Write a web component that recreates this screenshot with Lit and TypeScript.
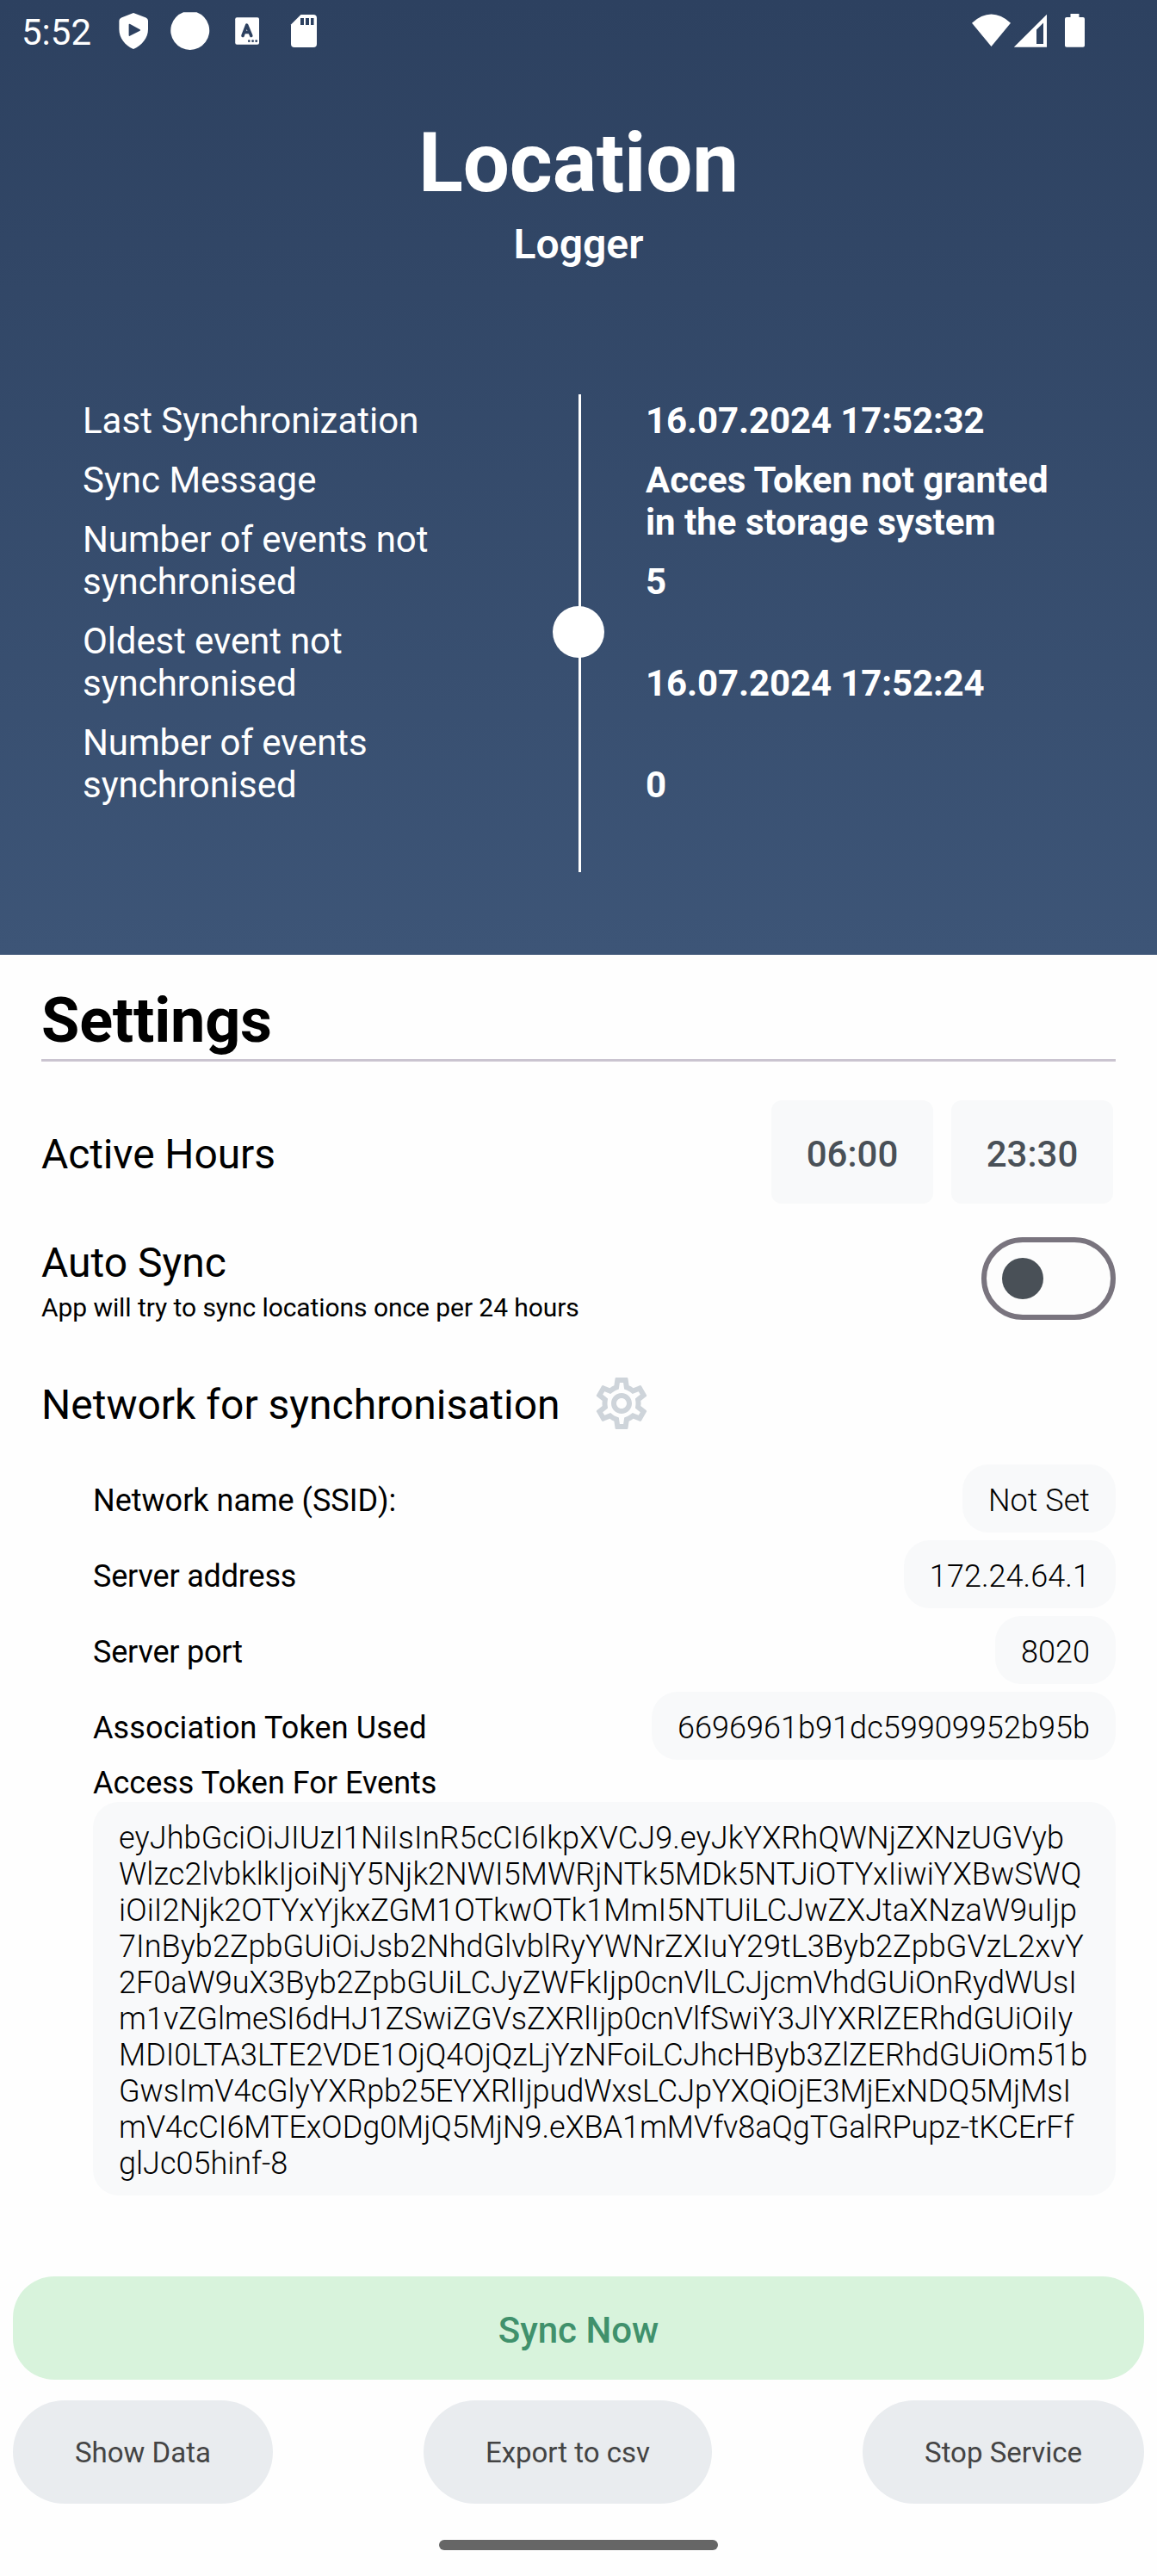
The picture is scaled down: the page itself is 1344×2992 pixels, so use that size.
import { LitElement, html, css, svg } from "lit";
import { customElement, property } from "lit/decorators.js";

const LEFT = [
  { lines: ["Last Synchronization"], tight: false },
  { lines: ["Sync Message"], tight: false },
  { lines: ["Number of events not", "synchronised"], tight: true },
  { lines: ["Oldest event not", "synchronised"], tight: true },
  { lines: ["Number of events", "synchronised"], tight: true },
];

const RIGHT = [
  { lines: ["16.07.2024 17:52:32"], tall: false, stamp: true },
  { lines: ["Acces Token not granted", "in the storage system"], tall: true, stamp: false },
  { lines: ["5"], tall: true, stamp: false },
  { lines: ["16.07.2024 17:52:24"], tall: true, stamp: true },
  { lines: ["0"], tall: true, stamp: false },
];

// label, value, label tracking in px
const NETWORK: [string, string, number][] = [
  ["Network name (SSID):", "Not Set", 0],
  ["Server address", "172.24.64.1", -0.18],
  ["Server port", "8020", -0.2],
  ["Association Token Used", "6696961b91dc59909952b95b", 0.12],
];

// line of the token, tracking in px
const TOKEN: [string, number][] = [
  ["eyJhbGciOiJIUzI1NiIsInR5cCI6IkpXVCJ9.eyJkYXRhQWNjZXNzUGVyb", 0.12],
  ["Wlzc2lvbklkIjoiNjY5Njk2NWI5MWRjNTk5MDk5NTJiOTYxIiwiYXBwSWQ", 0.06],
  ["iOiI2Njk2OTYxYjkxZGM1OTkwOTk1MmI5NTUiLCJwZXJtaXNzaW9uIjp", 0.08],
  ["7InByb2ZpbGUiOiJsb2NhdGlvblRyYWNrZXIuY29tL3Byb2ZpbGVzL2xvY", 0.06],
  ["2F0aW9uX3Byb2ZpbGUiLCJyZWFkIjp0cnVlLCJjcmVhdGUiOnRydWUsI", 0],
  ["m1vZGlmeSI6dHJ1ZSwiZGVsZXRlIjp0cnVlfSwiY3JlYXRlZERhdGUiOiIy", 0],
  ["MDI0LTA3LTE2VDE1OjQ4OjQzLjYzNFoiLCJhcHByb3ZlZERhdGUiOm51b", 0],
  ["GwsImV4cGlyYXRpb25EYXRlIjpudWxsLCJpYXQiOjE3MjExNDQ5MjMsI", -0.05],
  ["mV4cCI6MTExODg0MjQ5MjN9.eXBA1mMVfv8aQgTGalRPupz-tKCErFf", -0.04],
  ["glJc05hinf-8", 0],
];

@customElement("status-bar")
export class StatusBar extends LitElement {
  static styles = css`
    :host { display: flex; justify-content: space-between; height: 72px; color: #fff; }
    .left { display: flex; padding-left: 25px; }
    .time { width: 113px; font-size: 42px; line-height: 49px; padding-top: 13px; }
    svg { display: block; fill: #fff; }
    .cut { fill: #2d4160; }
    .mark { stroke: #2d4160; fill: none; stroke-width: 3.6; stroke-linecap: round; stroke-linejoin: round; }
  `;
  render() {
    return html`
      <div class="left">
        <div class="time">5:52</div>
        <svg width="240" height="72" viewBox="138 0 240 72">
          ${svg`
          <path d="M155 15 L169.500 20.500 Q172 21.500 172 24 V34 C172 44 165 52.500 155 57 C145 52.500 138.400 44 138.400 34 V24 Q138.400 21.500 141 20.500Z"/>
          <path class="cut" d="M149.600 28.800 Q149.600 27 151.200 28 L162.600 34.300 Q163.600 35 162.600 35.700 L151.200 41.600 Q149.600 42.600 149.600 40.700Z"/>
          <path d="M213 14.300 H228.500 A22.500 22.500 0 1 1 213 14.300Z"/>
          <rect x="273.200" y="20.200" width="27.800" height="31.600" rx="2"/>
          <path class="mark" d="M282 41.500 L286.700 29.200 L291.800 41.500 M283.800 37.500 H290"/>
          <circle class="cut" cx="289.300" cy="47.700" r="1.400"/>
          <circle class="cut" cx="293.600" cy="47.700" r="1.400"/>
          <circle class="cut" cx="297.700" cy="47.700" r="1.400"/>
          <path d="M349.500 17 H364 Q368 17 368 21 V51 Q368 55 364 55 H342 Q338 55 338 51 V28.500Z"/>
          <path class="cut" d="M349 21h4v8h-4zM355 21h4v8h-4zM361 21h3.500v8h-3.500z"/>`}
        </svg>
      </div>
      <svg width="224" height="72" viewBox="1120 0 224 72">
        ${svg`
        <path d="M1129 26.700 Q1151.500 6.500 1174 26.700 L1151.500 54Z"/>
        <path fill-rule="evenodd" d="M1216 16.800 V54.700 H1177.800Z M1212 26.500 L1204 34.500 V51 H1212Z"/>
        <path d="M1243.500 16 h10 v4 h4.500 q2 0 2 2 v31 q0 1.700 -2 1.700 h-19 q-2 0 -2 -1.700 v-31 q0 -2 2 -2 h4.500z"/>`}
      </svg>
    `;
  }
}

@customElement("sync-status")
export class SyncStatus extends LitElement {
  static styles = css`
    :host { display: flex; height: 555px; color: #fff; font-size: 42px; line-height: 49px; }
    .rail { position: relative; width: 60px; height: 555px; flex: none; }
    .line { width: 3px; height: 555px; margin-left: 30px; background: #fff; }
    .dot { position: absolute; left: 0; top: 246px; width: 60px; height: 60px; border-radius: 50%; background: #fff; }
    .labels, .values { box-sizing: border-box; white-space: nowrap; }
    .labels { width: 642px; flex: none; padding: 6px 0 0 96px; }
    .values { padding: 6px 0 0 48px; font-weight: 700; }
    .item { min-height: 49px; padding-bottom: 20px; }
    .tall { min-height: 98px; }
    .tight > div:first-child { letter-spacing: -0.12px; }
    .stamp { letter-spacing: -0.12px; }
  `;
  render() {
    return html`
      <div class="labels">
        ${LEFT.map(
          (l) => html`<div class="item ${l.tight ? "tight" : ""}">${l.lines.map((t) => html`<div>${t}</div>`)}</div>`
        )}
      </div>
      <div class="rail"><div class="line"></div><div class="dot"></div></div>
      <div class="values">
        ${RIGHT.map(
          (r) => html`<div class="item ${r.tall ? "tall" : ""} ${r.stamp ? "stamp" : ""}">
            ${r.lines.map((t) => html`<div>${t}</div>`)}
          </div>`
        )}
      </div>
    `;
  }
}

@customElement("network-row")
export class NetworkRow extends LitElement {
  @property() label = "";
  @property() value = "";
  @property({ type: Number }) tracking = 0;
  static styles = css`
    :host { display: flex; justify-content: space-between; height: 79px; margin-bottom: 9px;
      font-size: 36px; line-height: 42px; white-space: nowrap; }
    .label { padding-top: 21px; }
    .value { box-sizing: border-box; height: 79px; padding: 21px 30px 0; border-radius: 30px; background: #f8f9fa; font-weight: 300;
      letter-spacing: 0.05px; }
  `;
  render() {
    return html`<div class="label" style="letter-spacing:${this.tracking}px">${this.label}</div>
      <div class="value">${this.value}</div>`;
  }
}

@customElement("app-root")
export class AppRoot extends LitElement {
  static styles = css`
    :host { display: flex; flex-direction: column; width: 1344px; height: 2992px; overflow: hidden;
      background: #fefefe; color: #000; font-family: Roboto, sans-serif; }
    .hero { height: 1109px; flex: none; background: linear-gradient(#2d4160, #3d5577); color: #fff; }
    .title { margin-top: 61px; font-size: 96px; line-height: 112px; font-weight: 700; text-align: center; letter-spacing: -0.2px; }
    .subtitle { margin: 10px 0 146px; font-size: 48px; line-height: 57px; font-weight: 600; text-align: center; }
    .settings { flex: 1; padding: 34px 48px 0; white-space: nowrap; }
    .heading { font-size: 72px; line-height: 85px; height: 87px; font-weight: 700; letter-spacing: -0.2px; border-bottom: 3px solid #cac4d0; }
    .row { display: flex; justify-content: space-between; }
    .name { font-size: 48px; line-height: 57px; }
    .hours { height: 120px; margin-top: 45px; padding-right: 3px; }
    .hours .name { padding-top: 34px; letter-spacing: -0.12px; }
    .times { display: flex; gap: 21px; }
    .time { box-sizing: border-box; width: 188px; height: 120px; padding-top: 38px; border-radius: 12px; background: #f8f9fa; color: #495057;
      font-size: 42px; line-height: 49px; font-weight: 500; text-align: center; }
    .auto { margin-top: 39px; height: 96px; }
    .autotext { padding-top: 1px; }
    .hint { margin-top: 6px; font-size: 30px; line-height: 35px; letter-spacing: -0.07px; }
    .toggle { box-sizing: border-box; width: 156px; height: 96px; border: 6px solid #79747e; border-radius: 48px; padding: 18px; background: #fdfdfd; }
    .thumb { width: 48px; height: 48px; border-radius: 50%; background: #495057; }
    .nethead { display: flex; height: 72px; margin-top: 61px; gap: 36px; }
    .nethead .name { padding-top: 9px; width: 602px; }
    .gear { display: block; fill: #ced4da; }
    .network { padding: 35px 0 0 60px; }
    .tokenlabel { height: 40px; font-size: 36px; line-height: 42px; margin-top: -3px; }
    .token { box-sizing: border-box; height: 457px; padding: 21px 30px 0; border-radius: 30px; background: #f8f9fa;
      font-size: 36px; line-height: 42px; font-weight: 300; margin-top: 3px; }
    .actions { flex: none; padding: 0 15px; }
    .sync { box-sizing: border-box; height: 120px; padding-top: 38px; border-radius: 48px; background: #d8f3dc; color: #40916c;
      font-size: 42px; line-height: 49px; font-weight: 500; text-align: center; }
    .buttons { display: flex; justify-content: space-between; margin-top: 24px; }
    .button { box-sizing: border-box; height: 120px; border-radius: 60px; padding: 41px 72px 0; background: #e9ecef; color: #444;
      font-size: 33px; line-height: 39px; }
    .home { width: 324px; height: 12px; border-radius: 6px; background: #666; margin: 42px auto 30px; }
  `;
  render() {
    return html`
      <div class="hero">
        <status-bar></status-bar>
        <div class="title">Location</div>
        <div class="subtitle">Logger</div>
        <sync-status></sync-status>
      </div>
      <div class="settings">
        <div class="heading">Settings</div>
        <div class="row hours">
          <div class="name">Active Hours</div>
          <div class="times"><div class="time">06:00</div><div class="time">23:30</div></div>
        </div>
        <div class="row auto">
          <div class="autotext">
            <div class="name">Auto Sync</div>
            <div class="hint">App will try to sync locations once per 24 hours</div>
          </div>
          <div class="toggle"><div class="thumb"></div></div>
        </div>
        <div class="nethead">
          <div class="name">Network for synchronisation</div>
          <svg class="gear" width="72" height="72" viewBox="0 0 24 24">
            <path d="M19.430 12.980c.04-.32.07-.64.07-.98 0-.34-.03-.66-.07-.98l2.110-1.650c.19-.15.24-.42.12-.64l-2-3.460c-.09-.16-.26-.25-.44-.25-.06 0-.12.010-.17.030l-2.490 1c-.52-.4-1.080-.73-1.690-.98l-.38-2.650C14.460 2.180 14.250 2 14 2h-4c-.25 0-.46.18-.49.42l-.38 2.650c-.61.25-1.170.59-1.690.98l-2.490-1c-.06-.02-.12-.03-.18-.03-.17 0-.34.09-.43.25l-2 3.460c-.13.22-.07.49.12.64l2.110 1.650c-.04.32-.07.65-.07.98 0 .33.03.66.07.98l-2.110 1.650c-.19.15-.24.42-.12.64l2 3.460c.09.16.26.25.44.25.06 0 .12-.01.17-.03l2.490-1c.52.4 1.080.73 1.690.98l.38 2.650c.03.24.24.42.49.42h4c.25 0 .46-.18.49-.42l.38-2.650c.61-.25 1.170-.59 1.690-.98l2.490 1c.06.02.12.03.18.03.17 0 .34-.09.43-.25l2-3.460c.12-.22.07-.49-.12-.64l-2.110-1.650zm-1.980-1.710c.04.31.05.52.05.73 0 .21-.02.43-.05.73l-.14 1.130.89.7 1.080.84-.7 1.210-1.270-.51-1.040-.42-.9.68c-.43.32-.84.56-1.250.73l-1.060.43-.16 1.130-.2 1.350h-1.400l-.19-1.350-.16-1.130-1.060-.43c-.43-.18-.83-.41-1.230-.71l-.91-.7-1.060.43-1.270.51-.7-1.210 1.080-.84.89-.7-.14-1.130c-.03-.31-.05-.54-.05-.74s.02-.43.05-.73l.14-1.130-.89-.7-1.080-.84.7-1.210 1.270.51 1.040.42.9-.68c.43-.32.84-.56 1.250-.73l1.060-.43.16-1.130.2-1.350h1.390l.19 1.350.16 1.130 1.060.43c.43.18.83.41 1.230.71l.91.7 1.060-.43 1.270-.51.7 1.210-1.070.85-.89.7.14 1.130zM12 8c-2.210 0-4 1.790-4 4s1.790 4 4 4 4-1.790 4-4-1.790-4-4-4zm0 6c-1.100 0-2-.9-2-2s.9-2 2-2 2 .9 2 2-.9 2-2 2z"/>
          </svg>
        </div>
        <div class="network">
          ${NETWORK.map(
            ([l, v, t]) => html`<network-row .label=${l} .value=${v} .tracking=${t}></network-row>`
          )}
          <div class="tokenlabel">Access Token For Events</div>
          <div class="token">${TOKEN.map(([t, s]) => html`<div style="letter-spacing:${s}px">${t}</div>`)}</div>
        </div>
      </div>
      <div class="actions">
        <div class="sync">Sync Now</div>
        <div class="buttons">
          <div class="button">Show Data</div>
          <div class="button">Export to csv</div>
          <div class="button">Stop Service</div>
        </div>
        <div class="home"></div>
      </div>
    `;
  }
}
